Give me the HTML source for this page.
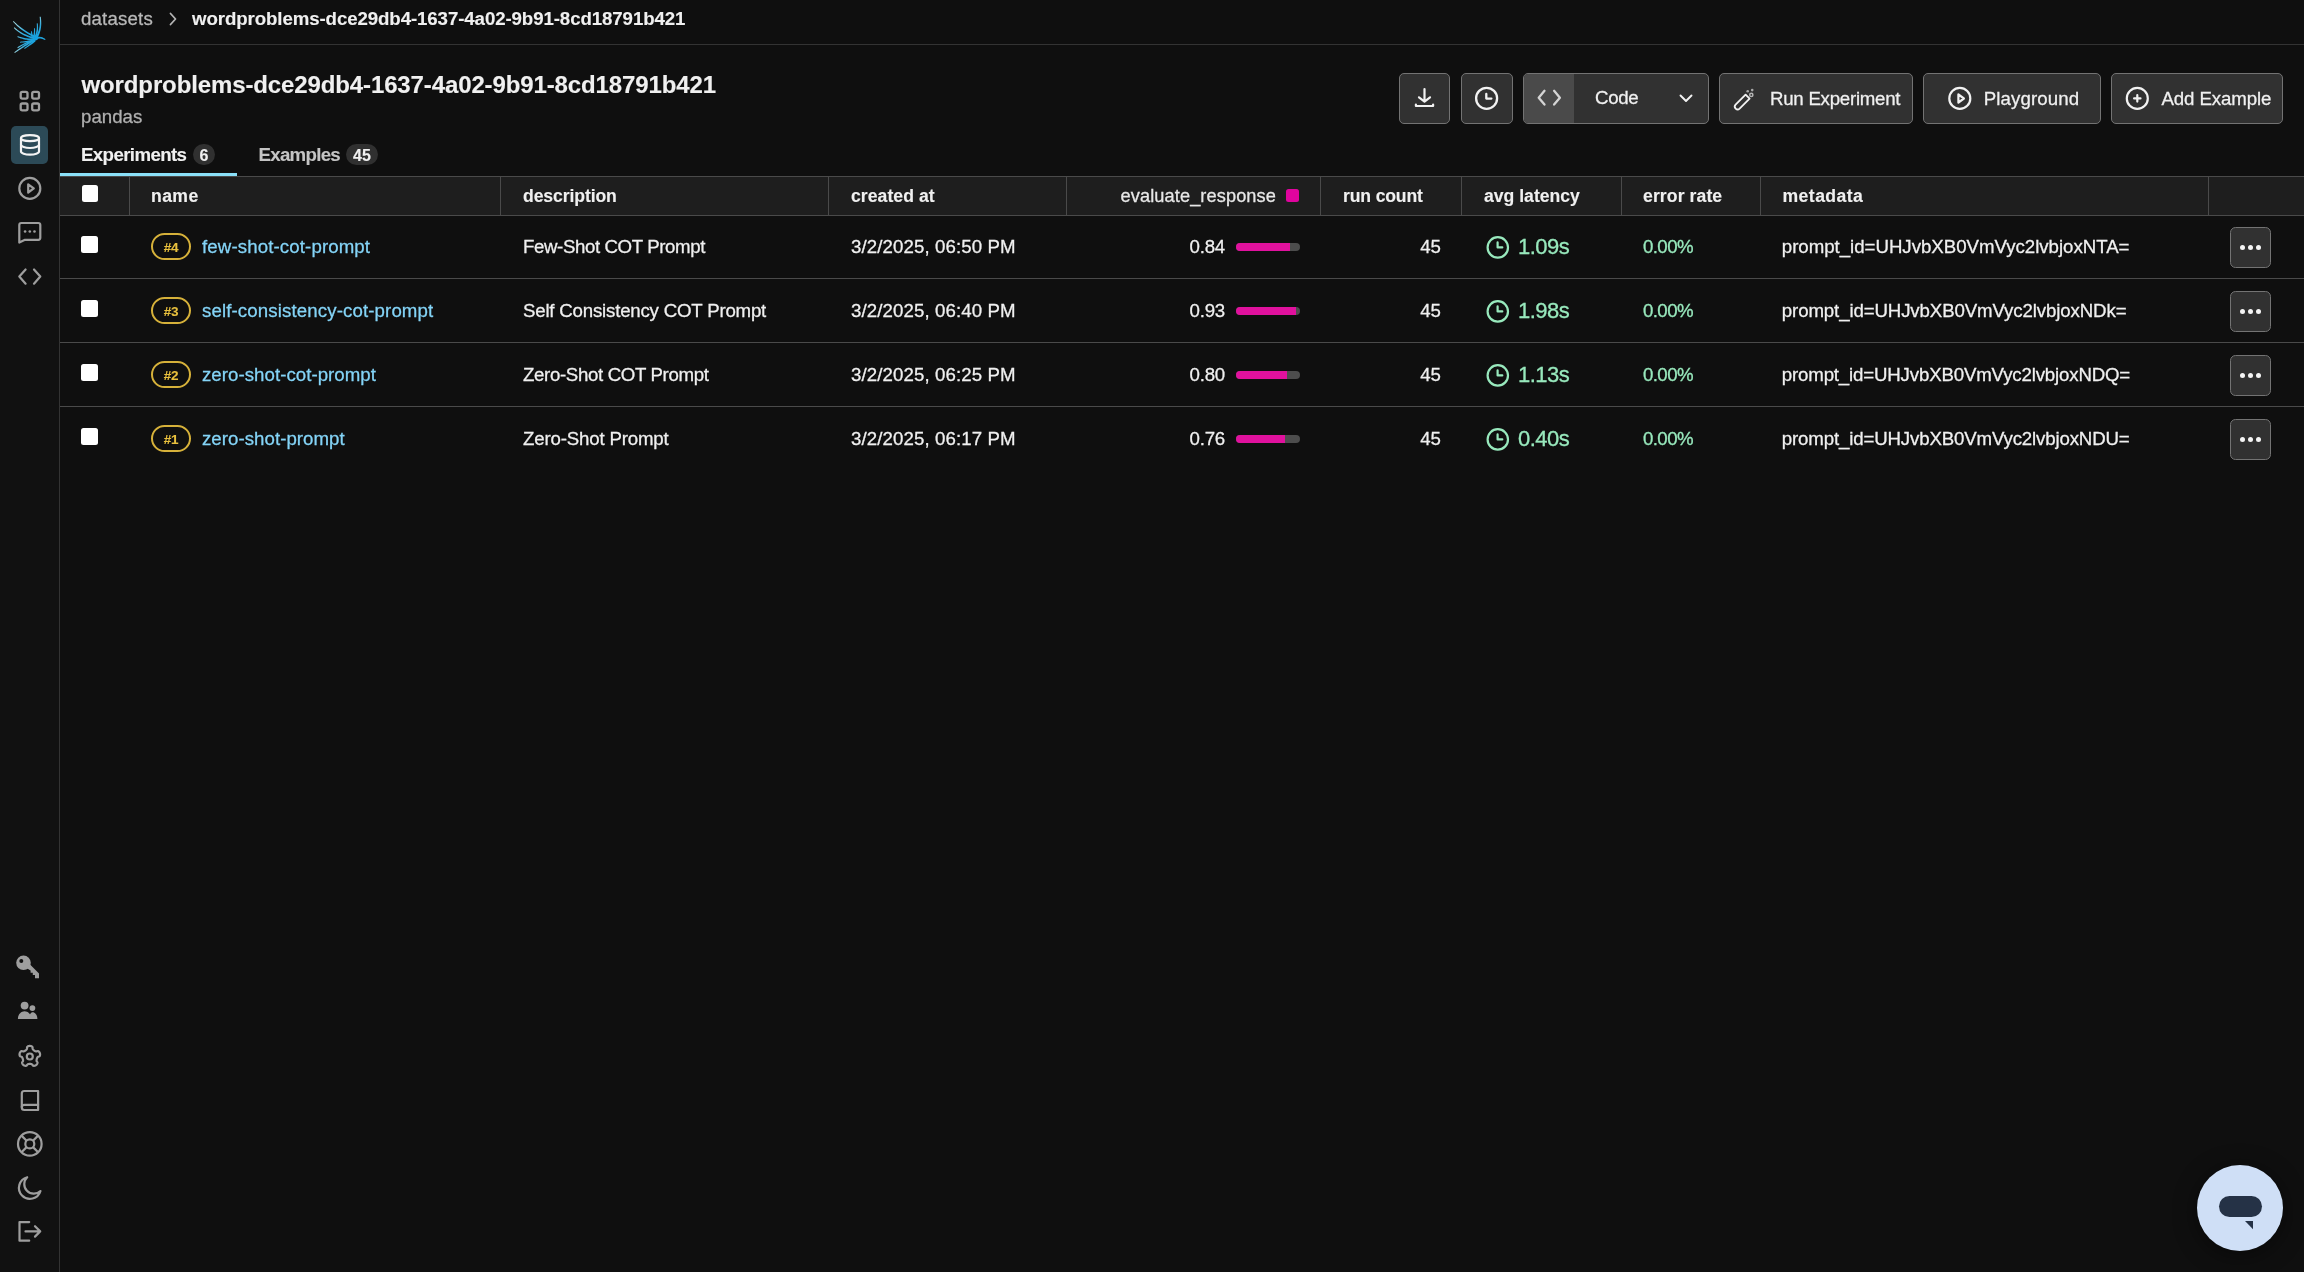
<!DOCTYPE html>
<html><head><meta charset="utf-8"><title>Phoenix</title>
<style>
html,body{margin:0;padding:0;}
body{width:2304px;height:1272px;background:#0f0f0f;overflow:hidden;position:relative;font-family:"Liberation Sans", sans-serif;}
.t{position:absolute;white-space:nowrap;}
#txt{position:absolute;left:0;top:0;width:2304px;height:1272px;will-change:transform;}
.r{position:absolute;}
svg{position:absolute;left:0;top:0;}
</style></head><body>
<div id="txt">
<div class="r" style="left:0px;top:0px;width:59px;height:1272px;background:#111111;"></div>
<div class="r" style="left:59px;top:0px;width:1px;height:1272px;background:#333333;"></div>
<div class="r" style="left:11px;top:126px;width:37px;height:38px;background:#2c4a57;border-radius:5px;"></div>
<div class="r" style="left:60px;top:44px;width:2244px;height:1px;background:#333333;"></div>
<div class="t" style="left:81px;top:10.20px;font-size:18.67px;line-height:18.67px;font-weight:400;color:#b8b8b8;letter-spacing:0.18px;-webkit-text-stroke:0.28px #b8b8b8;">datasets</div>
<div class="t" style="left:192px;top:10.20px;font-size:18.67px;line-height:18.67px;font-weight:700;color:#f0f0f0;letter-spacing:-0.09px;-webkit-text-stroke:0.12px #f0f0f0;">wordproblems-dce29db4-1637-4a02-9b91-8cd18791b421</div>
<div class="t" style="left:81.5px;top:73.28px;font-size:24px;line-height:24px;font-weight:700;color:#f0f0f0;letter-spacing:-0.12px;-webkit-text-stroke:0.12px #f0f0f0;">wordproblems-dce29db4-1637-4a02-9b91-8cd18791b421</div>
<div class="t" style="left:81px;top:108.20px;font-size:18.67px;line-height:18.67px;font-weight:400;color:#b0b0b0;letter-spacing:0px;-webkit-text-stroke:0.28px #b0b0b0;">pandas</div>
<div class="r" style="left:1399px;top:73px;width:51px;height:51px;background:#313131;box-sizing:border-box;border:1px solid #737373;border-radius:5px;"></div>
<div class="r" style="left:1461px;top:73px;width:52px;height:51px;background:#313131;box-sizing:border-box;border:1px solid #737373;border-radius:5px;"></div>
<div class="r" style="left:1523px;top:73px;width:186px;height:51px;background:#313131;box-sizing:border-box;border:1px solid #737373;border-radius:5px;"></div>
<div class="r" style="left:1524px;top:74px;width:50px;height:49px;background:#4a4a4a;border-radius:4px 0 0 4px;"></div>
<div class="r" style="left:1719px;top:73px;width:194px;height:51px;background:#313131;box-sizing:border-box;border:1px solid #737373;border-radius:5px;"></div>
<div class="r" style="left:1923px;top:73px;width:178px;height:51px;background:#313131;box-sizing:border-box;border:1px solid #737373;border-radius:5px;"></div>
<div class="r" style="left:2111px;top:73px;width:172px;height:51px;background:#313131;box-sizing:border-box;border:1px solid #737373;border-radius:5px;"></div>
<div class="t" style="left:1595px;top:89.20px;font-size:18.67px;line-height:18.67px;font-weight:400;color:#f0f0f0;letter-spacing:-0.3px;-webkit-text-stroke:0.28px #f0f0f0;">Code</div>
<div class="t" style="left:1770px;top:90.20px;font-size:18.67px;line-height:18.67px;font-weight:400;color:#f0f0f0;letter-spacing:-0.25px;-webkit-text-stroke:0.28px #f0f0f0;">Run Experiment</div>
<div class="t" style="left:1983.8px;top:90.20px;font-size:18.67px;line-height:18.67px;font-weight:400;color:#f0f0f0;letter-spacing:0.1px;-webkit-text-stroke:0.28px #f0f0f0;">Playground</div>
<div class="t" style="left:2161.5px;top:90.20px;font-size:18.67px;line-height:18.67px;font-weight:400;color:#f0f0f0;letter-spacing:-0.1px;-webkit-text-stroke:0.28px #f0f0f0;">Add Example</div>
<div class="t" style="left:81px;top:145.60px;font-size:18.67px;line-height:18.67px;font-weight:700;color:#f0f0f0;letter-spacing:-0.6px;-webkit-text-stroke:0.12px #f0f0f0;">Experiments</div>
<div class="r" style="left:193px;top:144px;width:22px;height:21px;background:#303030;border-radius:11px;"></div>
<div class="t" style="left:204px;top:147.66px;font-size:16px;line-height:16px;font-weight:700;color:#f0f0f0;letter-spacing:0px;-webkit-text-stroke:0.12px #f0f0f0;width:0;text-align:center;display:flex;justify-content:center;">6</div>
<div class="t" style="left:258.5px;top:145.80px;font-size:18.67px;line-height:18.67px;font-weight:700;color:#c4c4c4;letter-spacing:-0.7px;-webkit-text-stroke:0.12px #c4c4c4;">Examples</div>
<div class="r" style="left:346px;top:144px;width:32px;height:21px;background:#303030;border-radius:11px;"></div>
<div class="t" style="left:362px;top:147.66px;font-size:16px;line-height:16px;font-weight:700;color:#f0f0f0;letter-spacing:0px;-webkit-text-stroke:0.12px #f0f0f0;width:0;display:flex;justify-content:center;">45</div>
<div class="r" style="left:60px;top:173px;width:176.5px;height:3px;background:#8ae0f8;"></div>
<div class="r" style="left:60px;top:176px;width:2244px;height:40px;background:#1e1e1e;"></div>
<div class="r" style="left:60px;top:176px;width:2244px;height:1px;background:#4a4a4a;"></div>
<div class="r" style="left:60px;top:215px;width:2244px;height:1px;background:#4a4a4a;"></div>
<div class="r" style="left:129px;top:176px;width:1px;height:39px;background:#4a4a4a;"></div>
<div class="r" style="left:500px;top:176px;width:1px;height:39px;background:#4a4a4a;"></div>
<div class="r" style="left:828px;top:176px;width:1px;height:39px;background:#4a4a4a;"></div>
<div class="r" style="left:1066px;top:176px;width:1px;height:39px;background:#4a4a4a;"></div>
<div class="r" style="left:1320px;top:176px;width:1px;height:39px;background:#4a4a4a;"></div>
<div class="r" style="left:1461px;top:176px;width:1px;height:39px;background:#4a4a4a;"></div>
<div class="r" style="left:1621px;top:176px;width:1px;height:39px;background:#4a4a4a;"></div>
<div class="r" style="left:1760px;top:176px;width:1px;height:39px;background:#4a4a4a;"></div>
<div class="r" style="left:2208px;top:176px;width:1px;height:39px;background:#4a4a4a;"></div>
<div class="t" style="left:151px;top:187.70px;font-size:17.6px;line-height:17.6px;font-weight:700;color:#f0f0f0;letter-spacing:0.4px;-webkit-text-stroke:0.12px #f0f0f0;">name</div>
<div class="t" style="left:523px;top:187.70px;font-size:17.6px;line-height:17.6px;font-weight:700;color:#f0f0f0;letter-spacing:-0.1px;-webkit-text-stroke:0.12px #f0f0f0;">description</div>
<div class="t" style="left:851px;top:187.70px;font-size:17.6px;line-height:17.6px;font-weight:700;color:#f0f0f0;letter-spacing:0.05px;-webkit-text-stroke:0.12px #f0f0f0;">created at</div>
<div class="t" style="right:1028px;top:187.19px;font-size:18.2px;line-height:18.2px;font-weight:400;color:#e8e8e8;letter-spacing:0.1px;-webkit-text-stroke:0.28px #e8e8e8;">evaluate_response</div>
<div class="r" style="left:1286px;top:189px;width:12.7px;height:13px;background:#e0049e;border-radius:2.5px;"></div>
<div class="t" style="left:1343px;top:187.70px;font-size:17.6px;line-height:17.6px;font-weight:700;color:#f0f0f0;letter-spacing:-0.15px;-webkit-text-stroke:0.12px #f0f0f0;">run count</div>
<div class="t" style="left:1484px;top:187.70px;font-size:17.6px;line-height:17.6px;font-weight:700;color:#f0f0f0;letter-spacing:0px;-webkit-text-stroke:0.12px #f0f0f0;">avg latency</div>
<div class="t" style="left:1643px;top:187.70px;font-size:17.6px;line-height:17.6px;font-weight:700;color:#f0f0f0;letter-spacing:0.1px;-webkit-text-stroke:0.12px #f0f0f0;">error rate</div>
<div class="t" style="left:1782.5px;top:187.70px;font-size:17.6px;line-height:17.6px;font-weight:700;color:#f0f0f0;letter-spacing:0.45px;-webkit-text-stroke:0.12px #f0f0f0;">metadata</div>
<div class="r" style="left:81.5px;top:184.8px;width:16.7px;height:17px;background:#ffffff;border-radius:2.5px;"></div>
<div class="r" style="left:81.3px;top:235.6px;width:17px;height:17px;background:#ffffff;border-radius:2.5px;"></div>
<div class="r" style="left:151px;top:233px;width:40px;height:27px;background:transparent;box-sizing:border-box;border:2px solid #d6b13a;border-radius:14px;"></div>
<div class="t" style="left:171px;top:240.77px;font-size:13.5px;line-height:13.5px;font-weight:700;color:#e8c03e;letter-spacing:-0.3px;-webkit-text-stroke:0.12px #e8c03e;width:0;display:flex;justify-content:center;">#4</div>
<div class="t" style="left:202px;top:238.00px;font-size:18.67px;line-height:18.67px;font-weight:400;color:#84d4f7;letter-spacing:0.12px;-webkit-text-stroke:0.28px #84d4f7;">few-shot-cot-prompt</div>
<div class="t" style="left:523px;top:238.00px;font-size:18.67px;line-height:18.67px;font-weight:400;color:#f0f0f0;letter-spacing:-0.39px;-webkit-text-stroke:0.28px #f0f0f0;">Few-Shot COT Prompt</div>
<div class="t" style="left:851px;top:238.00px;font-size:18.67px;line-height:18.67px;font-weight:400;color:#f0f0f0;letter-spacing:0.1px;-webkit-text-stroke:0.28px #f0f0f0;">3/2/2025, 06:50 PM</div>
<div class="t" style="right:1079px;top:238.00px;font-size:18.67px;line-height:18.67px;font-weight:400;color:#f0f0f0;letter-spacing:-0.2px;-webkit-text-stroke:0.28px #f0f0f0;">0.84</div>
<div class="r" style="left:1236px;top:242.5px;width:64px;height:8.5px;background:#4d4d4d;border-radius:4.5px;overflow:hidden;"></div>
<div class="r" style="left:1236px;top:242.5px;width:53.76px;height:8.5px;background:#e0119d;border-radius:4.5px 0 0 4.5px;"></div>
<div class="t" style="right:863px;top:238.00px;font-size:18.67px;line-height:18.67px;font-weight:400;color:#f0f0f0;letter-spacing:0px;-webkit-text-stroke:0.28px #f0f0f0;">45</div>
<div class="t" style="left:1518px;top:236.38px;font-size:22px;line-height:22px;font-weight:400;color:#98e9bd;letter-spacing:-0.5px;-webkit-text-stroke:0.28px #98e9bd;">1.09s</div>
<div class="t" style="left:1643px;top:238.00px;font-size:18.67px;line-height:18.67px;font-weight:400;color:#98e9bd;letter-spacing:-0.6px;-webkit-text-stroke:0.28px #98e9bd;">0.00%</div>
<div class="t" style="left:1781.8px;top:238.00px;font-size:18.67px;line-height:18.67px;font-weight:400;color:#f0f0f0;letter-spacing:-0.02px;-webkit-text-stroke:0.28px #f0f0f0;">prompt_id=UHJvbXB0VmVyc2lvbjoxNTA=</div>
<div class="r" style="left:2230px;top:227px;width:41px;height:41px;background:#313131;box-sizing:border-box;border:1px solid #737373;border-radius:5.5px;"></div>
<div class="r" style="left:2240.0px;top:244.7px;width:5px;height:5px;background:#f4f4f4;border-radius:50%;"></div>
<div class="r" style="left:2248.0px;top:244.7px;width:5px;height:5px;background:#f4f4f4;border-radius:50%;"></div>
<div class="r" style="left:2256.0px;top:244.7px;width:5px;height:5px;background:#f4f4f4;border-radius:50%;"></div>
<div class="r" style="left:60px;top:278px;width:2244px;height:1px;background:#4a4a4a;"></div>
<div class="r" style="left:81.3px;top:299.6px;width:17px;height:17px;background:#ffffff;border-radius:2.5px;"></div>
<div class="r" style="left:151px;top:297px;width:40px;height:27px;background:transparent;box-sizing:border-box;border:2px solid #d6b13a;border-radius:14px;"></div>
<div class="t" style="left:171px;top:304.77px;font-size:13.5px;line-height:13.5px;font-weight:700;color:#e8c03e;letter-spacing:-0.3px;-webkit-text-stroke:0.12px #e8c03e;width:0;display:flex;justify-content:center;">#3</div>
<div class="t" style="left:202px;top:302.00px;font-size:18.67px;line-height:18.67px;font-weight:400;color:#84d4f7;letter-spacing:0.12px;-webkit-text-stroke:0.28px #84d4f7;">self-consistency-cot-prompt</div>
<div class="t" style="left:523px;top:302.00px;font-size:18.67px;line-height:18.67px;font-weight:400;color:#f0f0f0;letter-spacing:-0.2px;-webkit-text-stroke:0.28px #f0f0f0;">Self Consistency COT Prompt</div>
<div class="t" style="left:851px;top:302.00px;font-size:18.67px;line-height:18.67px;font-weight:400;color:#f0f0f0;letter-spacing:0.1px;-webkit-text-stroke:0.28px #f0f0f0;">3/2/2025, 06:40 PM</div>
<div class="t" style="right:1079px;top:302.00px;font-size:18.67px;line-height:18.67px;font-weight:400;color:#f0f0f0;letter-spacing:-0.2px;-webkit-text-stroke:0.28px #f0f0f0;">0.93</div>
<div class="r" style="left:1236px;top:306.5px;width:64px;height:8.5px;background:#4d4d4d;border-radius:4.5px;overflow:hidden;"></div>
<div class="r" style="left:1236px;top:306.5px;width:59.52px;height:8.5px;background:#e0119d;border-radius:4.5px 0 0 4.5px;"></div>
<div class="t" style="right:863px;top:302.00px;font-size:18.67px;line-height:18.67px;font-weight:400;color:#f0f0f0;letter-spacing:0px;-webkit-text-stroke:0.28px #f0f0f0;">45</div>
<div class="t" style="left:1518px;top:300.38px;font-size:22px;line-height:22px;font-weight:400;color:#98e9bd;letter-spacing:-0.5px;-webkit-text-stroke:0.28px #98e9bd;">1.98s</div>
<div class="t" style="left:1643px;top:302.00px;font-size:18.67px;line-height:18.67px;font-weight:400;color:#98e9bd;letter-spacing:-0.6px;-webkit-text-stroke:0.28px #98e9bd;">0.00%</div>
<div class="t" style="left:1781.8px;top:302.00px;font-size:18.67px;line-height:18.67px;font-weight:400;color:#f0f0f0;letter-spacing:-0.12px;-webkit-text-stroke:0.28px #f0f0f0;">prompt_id=UHJvbXB0VmVyc2lvbjoxNDk=</div>
<div class="r" style="left:2230px;top:291px;width:41px;height:41px;background:#313131;box-sizing:border-box;border:1px solid #737373;border-radius:5.5px;"></div>
<div class="r" style="left:2240.0px;top:308.7px;width:5px;height:5px;background:#f4f4f4;border-radius:50%;"></div>
<div class="r" style="left:2248.0px;top:308.7px;width:5px;height:5px;background:#f4f4f4;border-radius:50%;"></div>
<div class="r" style="left:2256.0px;top:308.7px;width:5px;height:5px;background:#f4f4f4;border-radius:50%;"></div>
<div class="r" style="left:60px;top:342px;width:2244px;height:1px;background:#4a4a4a;"></div>
<div class="r" style="left:81.3px;top:363.6px;width:17px;height:17px;background:#ffffff;border-radius:2.5px;"></div>
<div class="r" style="left:151px;top:361px;width:40px;height:27px;background:transparent;box-sizing:border-box;border:2px solid #d6b13a;border-radius:14px;"></div>
<div class="t" style="left:171px;top:368.77px;font-size:13.5px;line-height:13.5px;font-weight:700;color:#e8c03e;letter-spacing:-0.3px;-webkit-text-stroke:0.12px #e8c03e;width:0;display:flex;justify-content:center;">#2</div>
<div class="t" style="left:202px;top:366.00px;font-size:18.67px;line-height:18.67px;font-weight:400;color:#84d4f7;letter-spacing:0.04px;-webkit-text-stroke:0.28px #84d4f7;">zero-shot-cot-prompt</div>
<div class="t" style="left:523px;top:366.00px;font-size:18.67px;line-height:18.67px;font-weight:400;color:#f0f0f0;letter-spacing:-0.35px;-webkit-text-stroke:0.28px #f0f0f0;">Zero-Shot COT Prompt</div>
<div class="t" style="left:851px;top:366.00px;font-size:18.67px;line-height:18.67px;font-weight:400;color:#f0f0f0;letter-spacing:0.1px;-webkit-text-stroke:0.28px #f0f0f0;">3/2/2025, 06:25 PM</div>
<div class="t" style="right:1079px;top:366.00px;font-size:18.67px;line-height:18.67px;font-weight:400;color:#f0f0f0;letter-spacing:-0.2px;-webkit-text-stroke:0.28px #f0f0f0;">0.80</div>
<div class="r" style="left:1236px;top:370.5px;width:64px;height:8.5px;background:#4d4d4d;border-radius:4.5px;overflow:hidden;"></div>
<div class="r" style="left:1236px;top:370.5px;width:51.2px;height:8.5px;background:#e0119d;border-radius:4.5px 0 0 4.5px;"></div>
<div class="t" style="right:863px;top:366.00px;font-size:18.67px;line-height:18.67px;font-weight:400;color:#f0f0f0;letter-spacing:0px;-webkit-text-stroke:0.28px #f0f0f0;">45</div>
<div class="t" style="left:1518px;top:364.38px;font-size:22px;line-height:22px;font-weight:400;color:#98e9bd;letter-spacing:-0.5px;-webkit-text-stroke:0.28px #98e9bd;">1.13s</div>
<div class="t" style="left:1643px;top:366.00px;font-size:18.67px;line-height:18.67px;font-weight:400;color:#98e9bd;letter-spacing:-0.6px;-webkit-text-stroke:0.28px #98e9bd;">0.00%</div>
<div class="t" style="left:1781.8px;top:366.00px;font-size:18.67px;line-height:18.67px;font-weight:400;color:#f0f0f0;letter-spacing:-0.165px;-webkit-text-stroke:0.28px #f0f0f0;">prompt_id=UHJvbXB0VmVyc2lvbjoxNDQ=</div>
<div class="r" style="left:2230px;top:355px;width:41px;height:41px;background:#313131;box-sizing:border-box;border:1px solid #737373;border-radius:5.5px;"></div>
<div class="r" style="left:2240.0px;top:372.7px;width:5px;height:5px;background:#f4f4f4;border-radius:50%;"></div>
<div class="r" style="left:2248.0px;top:372.7px;width:5px;height:5px;background:#f4f4f4;border-radius:50%;"></div>
<div class="r" style="left:2256.0px;top:372.7px;width:5px;height:5px;background:#f4f4f4;border-radius:50%;"></div>
<div class="r" style="left:60px;top:406px;width:2244px;height:1px;background:#4a4a4a;"></div>
<div class="r" style="left:81.3px;top:427.6px;width:17px;height:17px;background:#ffffff;border-radius:2.5px;"></div>
<div class="r" style="left:151px;top:425px;width:40px;height:27px;background:transparent;box-sizing:border-box;border:2px solid #d6b13a;border-radius:14px;"></div>
<div class="t" style="left:171px;top:432.77px;font-size:13.5px;line-height:13.5px;font-weight:700;color:#e8c03e;letter-spacing:-0.3px;-webkit-text-stroke:0.12px #e8c03e;width:0;display:flex;justify-content:center;">#1</div>
<div class="t" style="left:202px;top:430.00px;font-size:18.67px;line-height:18.67px;font-weight:400;color:#84d4f7;letter-spacing:0.04px;-webkit-text-stroke:0.28px #84d4f7;">zero-shot-prompt</div>
<div class="t" style="left:523px;top:430.00px;font-size:18.67px;line-height:18.67px;font-weight:400;color:#f0f0f0;letter-spacing:-0.17px;-webkit-text-stroke:0.28px #f0f0f0;">Zero-Shot Prompt</div>
<div class="t" style="left:851px;top:430.00px;font-size:18.67px;line-height:18.67px;font-weight:400;color:#f0f0f0;letter-spacing:0.1px;-webkit-text-stroke:0.28px #f0f0f0;">3/2/2025, 06:17 PM</div>
<div class="t" style="right:1079px;top:430.00px;font-size:18.67px;line-height:18.67px;font-weight:400;color:#f0f0f0;letter-spacing:-0.2px;-webkit-text-stroke:0.28px #f0f0f0;">0.76</div>
<div class="r" style="left:1236px;top:434.5px;width:64px;height:8.5px;background:#4d4d4d;border-radius:4.5px;overflow:hidden;"></div>
<div class="r" style="left:1236px;top:434.5px;width:48.64px;height:8.5px;background:#e0119d;border-radius:4.5px 0 0 4.5px;"></div>
<div class="t" style="right:863px;top:430.00px;font-size:18.67px;line-height:18.67px;font-weight:400;color:#f0f0f0;letter-spacing:0px;-webkit-text-stroke:0.28px #f0f0f0;">45</div>
<div class="t" style="left:1518px;top:428.38px;font-size:22px;line-height:22px;font-weight:400;color:#98e9bd;letter-spacing:-0.5px;-webkit-text-stroke:0.28px #98e9bd;">0.40s</div>
<div class="t" style="left:1643px;top:430.00px;font-size:18.67px;line-height:18.67px;font-weight:400;color:#98e9bd;letter-spacing:-0.6px;-webkit-text-stroke:0.28px #98e9bd;">0.00%</div>
<div class="t" style="left:1781.8px;top:430.00px;font-size:18.67px;line-height:18.67px;font-weight:400;color:#f0f0f0;letter-spacing:-0.15px;-webkit-text-stroke:0.28px #f0f0f0;">prompt_id=UHJvbXB0VmVyc2lvbjoxNDU=</div>
<div class="r" style="left:2230px;top:419px;width:41px;height:41px;background:#313131;box-sizing:border-box;border:1px solid #737373;border-radius:5.5px;"></div>
<div class="r" style="left:2240.0px;top:436.7px;width:5px;height:5px;background:#f4f4f4;border-radius:50%;"></div>
<div class="r" style="left:2248.0px;top:436.7px;width:5px;height:5px;background:#f4f4f4;border-radius:50%;"></div>
<div class="r" style="left:2256.0px;top:436.7px;width:5px;height:5px;background:#f4f4f4;border-radius:50%;"></div>
<div class="r" style="left:2197px;top:1165px;width:86px;height:86px;border-radius:50%;background:#cfdff6;box-shadow:0 4px 24px rgba(0,0,0,0.45);"></div>
<div class="r" style="left:2219px;top:1195.5px;width:43px;height:21.5px;background:#253246;border-radius:11px;"></div>
</div>
<svg width="2304" height="1272" viewBox="0 0 2304 1272">
<path d="M170.5 13.5 L175.5 19 L170.5 24.5" fill="none" stroke="#b4b4b4" stroke-width="1.8" stroke-linecap="round" stroke-linejoin="round"/>
<g fill="none" stroke="#f2f2f2" stroke-width="2.2" stroke-linecap="round" stroke-linejoin="round"><path d="M1424.5 89 V101 M1419 97.3 L1424.5 101.6 L1430 97.3"/><path d="M1415.9 104.6 V106 H1433.1 V104.6"/></g>
<g fill="none" stroke="#f2f2f2" stroke-width="2.3" stroke-linecap="round" stroke-linejoin="round"><circle cx="1486.6" cy="98.3" r="10.5"/><path d="M1486.3 94 V98.6 H1491.4"/></g>
<g fill="none" stroke="#d4d4d4" stroke-width="2.3" stroke-linecap="round" stroke-linejoin="round"><path d="M1544.5 90.8 L1538.7 97.7 L1544.5 104.6 M1554.1 90.8 L1559.9 97.7 L1554.1 104.6"/></g>
<path d="M1680.5 95.5 L1686 101 L1691.5 95.5" fill="none" stroke="#f2f2f2" stroke-width="1.9" stroke-linecap="round" stroke-linejoin="round"/>
<g fill="none" stroke="#f2f2f2" stroke-width="1.8" stroke-linecap="round" stroke-linejoin="round"><path d="M1735.6 104.6 L1745.6 94.6 L1749.6 98.6 L1739.6 108.6 A2.83 2.83 0 0 1 1735.6 104.6 Z"/></g><g fill="none" stroke="#b4b4b4" stroke-width="1.5"><circle cx="1751.3" cy="94.9" r="1.6"/></g><g fill="#a8a8a8"><circle cx="1747.7" cy="91.3" r="1.3"/><circle cx="1752.2" cy="90.1" r="1.3"/></g>
<g fill="none" stroke="#f2f2f2" stroke-width="2.2" stroke-linecap="round" stroke-linejoin="round"><circle cx="1959.8" cy="98.4" r="10.5"/><path d="M1958.4 94.4 L1963.9 98.5 L1958.4 102.6 Z"/></g>
<g fill="none" stroke="#f2f2f2" stroke-width="2.2" stroke-linecap="round" stroke-linejoin="round"><circle cx="2137.3" cy="98.4" r="10.5"/><path d="M2137.3 95.2 V101.6 M2134.1 98.4 H2140.5"/></g>
<g fill="none" stroke="#98e9bd" stroke-width="2.2" stroke-linecap="round" stroke-linejoin="round"><circle cx="1497.8" cy="247.4" r="10.2"/><path d="M1497.6 242.4 V247.4 H1502.3"/></g>
<g fill="none" stroke="#98e9bd" stroke-width="2.2" stroke-linecap="round" stroke-linejoin="round"><circle cx="1497.8" cy="311.4" r="10.2"/><path d="M1497.6 306.4 V311.4 H1502.3"/></g>
<g fill="none" stroke="#98e9bd" stroke-width="2.2" stroke-linecap="round" stroke-linejoin="round"><circle cx="1497.8" cy="375.4" r="10.2"/><path d="M1497.6 370.4 V375.4 H1502.3"/></g>
<g fill="none" stroke="#98e9bd" stroke-width="2.2" stroke-linecap="round" stroke-linejoin="round"><circle cx="1497.8" cy="439.4" r="10.2"/><path d="M1497.6 434.4 V439.4 H1502.3"/></g>
<g fill="none" stroke="#9e9e9e" stroke-width="2.3" stroke-linejoin="round"><rect x="20.7" y="91.9" width="6.8" height="6.8" rx="1.6"/><rect x="32.2" y="91.9" width="6.8" height="6.8" rx="1.6"/><rect x="20.7" y="103.5" width="6.8" height="6.8" rx="1.6"/><rect x="32.2" y="103.5" width="6.8" height="6.8" rx="1.6"/></g>
<g fill="none" stroke="#f4f4f4" stroke-width="2.2" stroke-linecap="round" stroke-linejoin="round"><ellipse cx="30" cy="138.2" rx="9" ry="3"/><path d="M21 138.2 V151.5 C21 153.2 25 154.7 30 154.7 C35 154.7 39 153.2 39 151.5 V138.2"/><path d="M21 144.8 C21 146.5 25 148 30 148 C35 148 39 146.5 39 144.8"/></g>
<g fill="none" stroke="#9e9e9e" stroke-width="2.2" stroke-linecap="round" stroke-linejoin="round"><circle cx="29.8" cy="188.4" r="10.5"/><path d="M28.2 184.3 L33.8 188.4 L28.2 192.5 Z"/></g>
<g fill="none" stroke="#9e9e9e" stroke-width="2.2" stroke-linecap="round" stroke-linejoin="round"><path d="M19.3 242.6 V225 A2 2 0 0 1 21.3 223 H38.3 A2 2 0 0 1 40.3 225 V237.8 A2 2 0 0 1 38.3 239.8 H25 Z"/></g><g fill="#9e9e9e"><circle cx="25.1" cy="231.5" r="1.3"/><circle cx="29.8" cy="231.5" r="1.3"/><circle cx="34.5" cy="231.5" r="1.3"/></g>
<g fill="none" stroke="#9e9e9e" stroke-width="2.2" stroke-linecap="round" stroke-linejoin="round"><path d="M25.6 269.5 L19.3 276.6 L25.6 283.7 M34 269.5 L40.3 276.6 L34 283.7"/></g>
<g fill="#9e9e9e"><circle cx="23.5" cy="962.8" r="7.3"/><path d="M25.5 967.5 L29.3 963.7 L39 973.4 V978.3 H35 V975 H32.8 V972.8 H30.6 V970.6 Z"/></g><circle cx="21.3" cy="961" r="2" fill="#0f0f0f"/>
<g fill="#9e9e9e"><circle cx="24.6" cy="1005.6" r="3.9"/><circle cx="32.4" cy="1008.1" r="2.9"/><path d="M17.9 1018.9 C17.9 1014.5 21 1011.3 24.6 1011.3 C28.2 1011.3 31.2 1014.5 31.2 1018.9 Z"/><path d="M29 1018.9 C29 1015.3 30.6 1012.3 32.6 1012.3 C35.2 1012.3 37.4 1015.3 37.4 1018.9 Z"/></g>
<g fill="none" stroke="#9e9e9e" stroke-width="2.2" stroke-linejoin="round"><path d="M29.80 1045.90 L30.17 1045.92 L30.54 1045.97 L30.90 1046.05 L31.25 1046.16 L31.60 1046.32 L31.92 1046.51 L32.23 1046.76 L32.50 1047.09 L32.58 1047.94 L32.61 1048.79 L32.78 1049.12 L32.97 1049.39 L33.16 1049.62 L33.35 1049.82 L33.54 1050.01 L33.74 1050.19 L33.94 1050.36 L34.15 1050.51 L34.36 1050.66 L34.58 1050.80 L34.81 1050.93 L35.05 1051.06 L35.31 1051.18 L35.59 1051.29 L35.90 1051.38 L36.27 1051.45 L37.08 1051.21 L37.92 1051.02 L38.32 1051.18 L38.64 1051.39 L38.93 1051.65 L39.18 1051.92 L39.40 1052.22 L39.59 1052.54 L39.75 1052.88 L39.88 1053.22 L39.98 1053.58 L40.05 1053.95 L40.08 1054.31 L40.08 1054.69 L40.04 1055.06 L39.96 1055.43 L39.82 1055.80 L39.59 1056.16 L38.80 1056.50 L38.00 1056.79 L37.74 1057.06 L37.54 1057.31 L37.38 1057.57 L37.25 1057.81 L37.13 1058.06 L37.02 1058.30 L36.92 1058.54 L36.84 1058.79 L36.76 1059.03 L36.70 1059.29 L36.64 1059.55 L36.60 1059.81 L36.56 1060.10 L36.54 1060.39 L36.55 1060.72 L36.60 1061.09 L37.08 1061.79 L37.52 1062.53 L37.49 1062.95 L37.39 1063.33 L37.24 1063.68 L37.05 1064.01 L36.83 1064.31 L36.59 1064.59 L36.32 1064.85 L36.03 1065.08 L35.72 1065.28 L35.40 1065.46 L35.06 1065.60 L34.70 1065.72 L34.33 1065.79 L33.95 1065.83 L33.56 1065.81 L33.15 1065.70 L32.58 1065.06 L32.06 1064.39 L31.73 1064.22 L31.42 1064.12 L31.13 1064.04 L30.85 1063.99 L30.58 1063.95 L30.32 1063.92 L30.06 1063.91 L29.80 1063.90 L29.54 1063.91 L29.28 1063.92 L29.02 1063.95 L28.75 1063.99 L28.47 1064.04 L28.18 1064.12 L27.87 1064.22 L27.54 1064.39 L27.02 1065.06 L26.45 1065.70 L26.04 1065.81 L25.65 1065.83 L25.27 1065.79 L24.90 1065.72 L24.54 1065.60 L24.20 1065.46 L23.88 1065.28 L23.57 1065.08 L23.28 1064.85 L23.01 1064.59 L22.77 1064.31 L22.55 1064.01 L22.36 1063.68 L22.21 1063.33 L22.11 1062.95 L22.08 1062.53 L22.52 1061.79 L23.00 1061.09 L23.05 1060.72 L23.06 1060.39 L23.04 1060.10 L23.00 1059.81 L22.96 1059.55 L22.90 1059.29 L22.84 1059.03 L22.76 1058.79 L22.68 1058.54 L22.58 1058.30 L22.47 1058.06 L22.35 1057.81 L22.22 1057.57 L22.06 1057.31 L21.86 1057.06 L21.60 1056.79 L20.80 1056.50 L20.01 1056.16 L19.78 1055.80 L19.64 1055.43 L19.56 1055.06 L19.52 1054.69 L19.52 1054.31 L19.55 1053.95 L19.62 1053.58 L19.72 1053.22 L19.85 1052.88 L20.01 1052.54 L20.20 1052.22 L20.42 1051.92 L20.67 1051.65 L20.96 1051.39 L21.28 1051.18 L21.68 1051.02 L22.52 1051.21 L23.33 1051.45 L23.70 1051.38 L24.01 1051.29 L24.29 1051.18 L24.55 1051.06 L24.79 1050.93 L25.02 1050.80 L25.24 1050.66 L25.45 1050.51 L25.66 1050.36 L25.86 1050.19 L26.06 1050.01 L26.25 1049.82 L26.44 1049.62 L26.63 1049.39 L26.82 1049.12 L26.99 1048.79 L27.02 1047.94 L27.10 1047.09 L27.37 1046.76 L27.68 1046.51 L28.00 1046.32 L28.35 1046.16 L28.70 1046.05 L29.06 1045.97 L29.43 1045.92Z"/><circle cx="29.8" cy="1056.5" r="3"/></g>
<g fill="none" stroke="#9e9e9e" stroke-width="2.2" stroke-linecap="round" stroke-linejoin="round"><path d="M38.1 1091 V1110 H24.3 A2.5 2.5 0 0 1 21.8 1107.5 V1093.5 A2.5 2.5 0 0 1 24.3 1091 Z"/><path d="M21.8 1107 A2.5 2.5 0 0 1 24.3 1104.8 H38.1"/></g>
<g fill="none" stroke="#9e9e9e" stroke-width="2.2"><circle cx="29.8" cy="1143.9" r="11.8"/><circle cx="29.8" cy="1143.9" r="4.5"/><path d="M21.5 1135.6 L26.6 1140.7 M38.1 1135.6 L33 1140.7 M21.5 1152.2 L26.6 1147.1 M38.1 1152.2 L33 1147.1"/></g>
<path d="M27.2 1177.2 A11 11 0 1 0 40.5 1191 A9.5 9.5 0 0 1 27.2 1177.2 Z" fill="none" stroke="#9e9e9e" stroke-width="2.2" stroke-linejoin="round"/>
<g fill="none" stroke="#9e9e9e" stroke-width="2.2" stroke-linecap="round" stroke-linejoin="round"><path d="M29.2 1222.1 H19.5 V1240.7 H29.2"/><path d="M25.5 1231.4 H40.2 M35 1226.2 L40.2 1231.4 L35 1236.6"/></g>
<defs><radialGradient id="lg" gradientUnits="userSpaceOnUse" cx="36" cy="38.5" r="25"><stop offset="0" stop-color="#14a0de"/><stop offset="0.55" stop-color="#2eaadc"/><stop offset="1" stop-color="#9ad6e2"/></radialGradient></defs>
<g fill="url(#lg)"><path d="M12.93 21.63 L14.03 22.87 L15.17 24.08 L16.36 25.26 L17.60 26.42 L18.89 27.56 L20.22 28.67 L21.60 29.75 L23.02 30.81 L24.49 31.85 L26.01 32.86 L27.57 33.85 L29.19 34.81 L30.84 35.75 L32.55 36.66 L34.30 37.55 L36.09 38.41 L36.91 36.59 L35.13 35.80 L33.39 34.99 L31.69 34.15 L30.04 33.29 L28.43 32.40 L26.87 31.49 L25.35 30.55 L23.88 29.59 L22.45 28.60 L21.06 27.58 L19.72 26.54 L18.42 25.48 L17.17 24.39 L15.96 23.27 L14.79 22.13 L13.67 20.97Z"/><path d="M13.84 27.95 L14.84 28.96 L15.88 29.93 L16.98 30.86 L18.12 31.76 L19.32 32.62 L20.57 33.44 L21.86 34.22 L23.21 34.97 L24.61 35.68 L26.06 36.35 L27.55 36.98 L29.10 37.58 L30.70 38.13 L32.34 38.65 L34.04 39.13 L35.78 39.58 L36.22 37.62 L34.51 37.25 L32.85 36.85 L31.24 36.40 L29.67 35.92 L28.16 35.41 L26.69 34.85 L25.26 34.26 L23.89 33.63 L22.56 32.96 L21.28 32.26 L20.04 31.52 L18.85 30.74 L17.71 29.93 L16.61 29.07 L15.56 28.18 L14.56 27.25Z"/><path d="M17.40 36.96 L18.34 37.39 L19.31 37.80 L20.30 38.17 L21.32 38.52 L22.36 38.85 L23.43 39.14 L24.53 39.40 L25.65 39.64 L26.80 39.85 L27.97 40.03 L29.17 40.18 L30.39 40.30 L31.64 40.39 L32.91 40.46 L34.21 40.49 L35.53 40.50 L35.47 38.50 L34.19 38.55 L32.94 38.58 L31.71 38.58 L30.50 38.55 L29.31 38.50 L28.15 38.41 L27.01 38.30 L25.90 38.16 L24.81 37.99 L23.74 37.80 L22.69 37.58 L21.67 37.33 L20.67 37.05 L19.69 36.74 L18.74 36.41 L17.80 36.04Z"/><path d="M20.03 42.65 L20.79 42.62 L21.57 42.59 L22.37 42.55 L23.18 42.50 L24.01 42.45 L24.85 42.39 L25.71 42.32 L26.58 42.25 L27.47 42.16 L28.38 42.07 L29.30 41.98 L30.24 41.87 L31.19 41.76 L32.16 41.64 L33.14 41.52 L34.14 41.39 L33.86 39.61 L32.87 39.80 L31.90 39.98 L30.95 40.15 L30.01 40.31 L29.09 40.47 L28.19 40.62 L27.29 40.77 L26.42 40.90 L25.56 41.04 L24.71 41.16 L23.88 41.27 L23.07 41.38 L22.27 41.49 L21.49 41.58 L20.72 41.67 L19.97 41.75Z"/><path d="M14.90 53.00 L16.22 52.09 L17.56 51.19 L18.90 50.30 L20.26 49.41 L21.64 48.54 L23.02 47.68 L24.42 46.82 L25.82 45.98 L27.24 45.14 L28.68 44.32 L30.12 43.50 L31.58 42.70 L33.04 41.90 L34.52 41.11 L36.01 40.34 L37.52 39.57 L36.48 37.63 L35.00 38.47 L33.53 39.32 L32.07 40.18 L30.62 41.05 L29.19 41.93 L27.77 42.82 L26.37 43.72 L24.98 44.62 L23.60 45.54 L22.23 46.46 L20.88 47.39 L19.54 48.34 L18.21 49.29 L16.89 50.25 L15.59 51.22 L14.30 52.20Z"/><path d="M17.85 48.17 L18.67 47.67 L19.51 47.18 L20.36 46.69 L21.24 46.22 L22.13 45.76 L23.05 45.31 L23.98 44.87 L24.94 44.43 L25.91 44.01 L26.91 43.60 L27.92 43.20 L28.95 42.81 L30.01 42.43 L31.08 42.06 L32.17 41.70 L33.28 41.35 L32.72 39.65 L31.60 40.06 L30.50 40.48 L29.43 40.91 L28.37 41.35 L27.34 41.80 L26.32 42.26 L25.33 42.73 L24.36 43.22 L23.41 43.71 L22.48 44.21 L21.57 44.72 L20.69 45.24 L19.82 45.77 L18.98 46.31 L18.15 46.87 L17.35 47.43Z"/><path d="M24.65 48.88 L25.24 48.52 L25.85 48.14 L26.48 47.76 L27.11 47.36 L27.75 46.94 L28.41 46.52 L29.07 46.08 L29.75 45.62 L30.43 45.15 L31.13 44.67 L31.84 44.18 L32.56 43.67 L33.29 43.15 L34.04 42.62 L34.79 42.07 L35.55 41.51 L34.45 40.09 L33.72 40.69 L33.01 41.28 L32.30 41.85 L31.61 42.42 L30.93 42.96 L30.26 43.50 L29.60 44.02 L28.95 44.53 L28.32 45.02 L27.69 45.51 L27.07 45.98 L26.47 46.43 L25.87 46.87 L25.29 47.30 L24.72 47.72 L24.15 48.12Z"/><path d="M39.65 16.87 L39.79 18.37 L39.87 19.83 L39.90 21.26 L39.88 22.66 L39.81 24.03 L39.68 25.36 L39.50 26.66 L39.26 27.93 L38.98 29.17 L38.64 30.37 L38.26 31.54 L37.82 32.68 L37.33 33.78 L36.79 34.86 L36.20 35.90 L35.57 36.92 L37.43 38.08 L38.07 36.94 L38.64 35.77 L39.16 34.58 L39.62 33.36 L40.02 32.11 L40.37 30.84 L40.66 29.54 L40.89 28.22 L41.06 26.87 L41.18 25.50 L41.25 24.10 L41.26 22.68 L41.21 21.23 L41.11 19.75 L40.95 18.25 L40.75 16.73Z"/><path d="M36.70 23.47 L36.78 24.40 L36.83 25.32 L36.84 26.22 L36.83 27.11 L36.79 27.99 L36.72 28.86 L36.61 29.71 L36.48 30.55 L36.32 31.37 L36.13 32.18 L35.91 32.98 L35.67 33.77 L35.39 34.54 L35.09 35.30 L34.75 36.04 L34.39 36.78 L36.21 37.62 L36.54 36.80 L36.84 35.96 L37.11 35.11 L37.35 34.26 L37.55 33.40 L37.72 32.52 L37.86 31.64 L37.97 30.75 L38.04 29.85 L38.09 28.95 L38.10 28.03 L38.08 27.11 L38.03 26.18 L37.95 25.24 L37.84 24.29 L37.70 23.33Z"/><path d="M34.05 28.33 L34.05 28.91 L34.05 29.48 L34.03 30.04 L34.01 30.60 L33.97 31.16 L33.92 31.70 L33.87 32.24 L33.80 32.77 L33.73 33.30 L33.64 33.81 L33.55 34.33 L33.44 34.83 L33.33 35.33 L33.20 35.82 L33.07 36.30 L32.93 36.78 L34.67 37.22 L34.77 36.69 L34.86 36.16 L34.93 35.62 L35.00 35.08 L35.05 34.54 L35.09 33.99 L35.13 33.44 L35.15 32.88 L35.16 32.32 L35.16 31.75 L35.15 31.18 L35.13 30.61 L35.10 30.03 L35.06 29.45 L35.01 28.86 L34.95 28.27Z"/><path d="M31.05 31.32 L31.04 31.61 L31.04 31.90 L31.04 32.21 L31.05 32.52 L31.05 32.84 L31.07 33.17 L31.08 33.51 L31.11 33.85 L31.13 34.21 L31.16 34.57 L31.19 34.95 L31.23 35.33 L31.27 35.72 L31.31 36.12 L31.36 36.53 L31.41 36.94 L32.99 36.66 L32.89 36.26 L32.80 35.87 L32.72 35.48 L32.64 35.11 L32.56 34.74 L32.48 34.39 L32.41 34.04 L32.34 33.70 L32.28 33.36 L32.22 33.04 L32.17 32.73 L32.12 32.42 L32.07 32.12 L32.03 31.83 L31.99 31.55 L31.95 31.28Z"/><path d="M45.57 39.18 L44.91 38.72 L44.24 38.31 L43.56 37.94 L42.87 37.62 L42.17 37.34 L41.46 37.11 L40.75 36.93 L40.02 36.80 L39.28 36.72 L38.53 36.70 L37.78 36.72 L37.02 36.80 L36.26 36.93 L35.49 37.11 L34.72 37.34 L33.94 37.62 L35.06 39.98 L35.66 39.66 L36.26 39.38 L36.86 39.15 L37.46 38.95 L38.06 38.80 L38.66 38.69 L39.27 38.62 L39.88 38.60 L40.50 38.61 L41.13 38.68 L41.76 38.78 L42.40 38.93 L43.05 39.13 L43.70 39.38 L44.36 39.68 L45.03 40.02Z"/><circle cx="36.2" cy="38.6" r="1.6"/></g>
<path d="M2245 1221 L2253 1221 L2253 1229.2 Z" fill="#253246"/>
</svg>
</body></html>
